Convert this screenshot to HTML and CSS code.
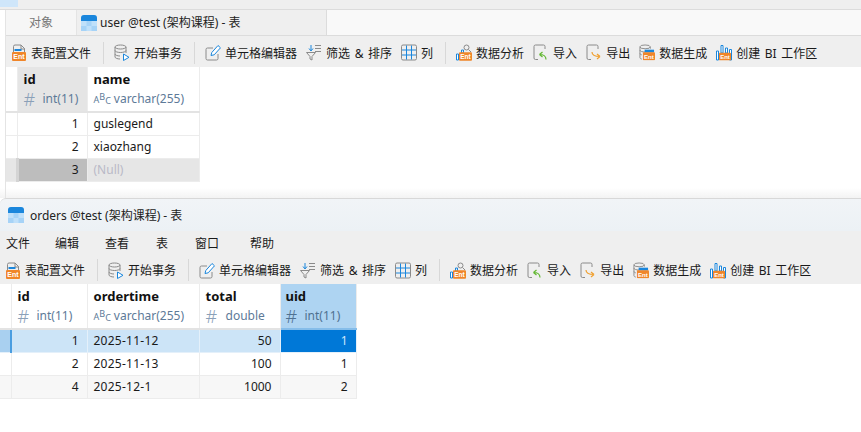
FILE: index.html
```html
<!DOCTYPE html>
<html lang="zh-CN">
<head>
<meta charset="utf-8">
<title>Navicat tables</title>
<link rel="stylesheet" href="styles.css">
</head>
<body>
<svg class="defs" width="0" height="0" aria-hidden="true">
  <defs>
    <symbol id="i-table" viewBox="0 0 16 16">
      <rect width="16" height="16" rx="3" fill="#bfe0fa"/>
      <path d="M0 3a3 3 0 0 1 3-3h10a3 3 0 0 1 3 3v3H0z" fill="#1a86dc"/>
      <rect x="5.500" y="6" width="5" height="5" fill="#a6d3f7"/>
      <rect y="11" width="5.500" height="5" fill="#a6d3f7"/>
      <rect x="10.500" y="11" width="5.500" height="5" fill="#a6d3f7"/>
    </symbol>
    <symbol id="i-ent" viewBox="0 0 14 9">
      <rect width="14" height="9" rx="1" fill="#f0862a"/>
      <text x="7" y="7.400" text-anchor="middle" class="ent">Ent</text>
    </symbol>
    <symbol id="i-profile" viewBox="0 0 16 17">
      <path d="M2.500 9V2.500a1.500 1.500 0 0 1 1.500-1.500h6l3.500 3.500V9" fill="none" stroke="#8a8a8a"/>
      <path d="M10 1v4h4" fill="none" stroke="#8a8a8a"/>
      <rect x="3.500" y="5" width="7" height="2" fill="#1a86dc"/>
      <use href="#i-ent" x="1" y="8" width="14" height="9"/>
    </symbol>
    <symbol id="i-tx" viewBox="0 0 16 17">
      <ellipse cx="6.500" cy="3" rx="5.500" ry="2" fill="none" stroke="#8a8a8a"/>
      <path d="M1 3v10c0 1.100 2.500 2 5 2M12 3v6M1 6.500c0 1.100 2.500 2 5.500 2s5.500-.9 5.500-2M1 10c0 1.100 2.500 2 5 2" fill="none" stroke="#8a8a8a"/>
      <path d="M9.500 10v6.500l5.500-3.200z" fill="#fff" stroke="#1a86dc"/>
    </symbol>
    <symbol id="i-edit" viewBox="0 0 16 17">
      <path d="M8 4H2.500A1.500 1.500 0 0 0 1 5.500v9A1.500 1.500 0 0 0 2.500 16h9a1.500 1.500 0 0 0 1.500-1.500V10" fill="none" stroke="#8a8a8a"/>
      <path d="M6 11.500l.8-3L13 1.500l2.500 2.300-6.300 7z" fill="#fff" stroke="#1a86dc"/>
    </symbol>
    <symbol id="i-filter" viewBox="0 0 16 17">
      <path d="M.5 8.500h9l-3.500 4v3.500l-2-1v-2.500z" fill="none" stroke="#8a8a8a"/>
      <path d="M5 1v5M3 4.500L5 7l2-2.500" fill="none" stroke="#1a86dc"/>
      <path d="M9 1.500h6M9 4.500h6M9 7.500h6" stroke="#8a8a8a"/>
    </symbol>
    <symbol id="i-cols" viewBox="0 0 16 16">
      <rect x=".5" y=".5" width="15" height="15" rx="1.500" fill="none" stroke="#8a8a8a"/>
      <path d="M5.500 1v14M10.500 1v14M1 5.500h14M1 10.500h14" stroke="#1a86dc"/>
    </symbol>
    <symbol id="i-analyze" viewBox="0 0 16 17">
      <circle cx="10.500" cy="3.500" r="2.500" fill="none" stroke="#8a8a8a"/>
      <path d="M12.500 5.500l2.500 2.500" stroke="#8a8a8a"/>
      <path d="M5.500 6h2v3h-2z" fill="none" stroke="#1a86dc"/>
      <path d="M.5 10h2v6h-2z" fill="#fff" stroke="#1a86dc"/>
      <use href="#i-ent" x="3" y="8" width="13" height="9"/>
    </symbol>
    <symbol id="i-import" viewBox="0 0 16 17">
      <path d="M5 15.500H2.500A1.500 1.500 0 0 1 1 14V2.500A1.500 1.500 0 0 1 2.500 1h8A1.500 1.500 0 0 1 12 2.500V5" fill="none" stroke="#8a8a8a"/>
      <path d="M13 15.500c0-3-2-5-6.500-5M6.500 10.500l3-2.500M6.500 10.500l3 2.500" fill="none" stroke="#62b832" stroke-width="1.200"/>
    </symbol>
    <symbol id="i-export" viewBox="0 0 16 17">
      <path d="M5 15.500H2.500A1.500 1.500 0 0 1 1 14V2.500A1.500 1.500 0 0 1 2.500 1h8A1.500 1.500 0 0 1 12 2.500V5" fill="none" stroke="#8a8a8a"/>
      <path d="M6 8c0 2.500 2.500 4.500 8 4.500M14 12.500l-3-2.500M14 12.500l-3 2.500" fill="none" stroke="#f0a030" stroke-width="1.200"/>
    </symbol>
    <symbol id="i-gen" viewBox="0 0 17 17">
      <ellipse cx="6.500" cy="2.500" rx="5.500" ry="2" fill="none" stroke="#8a8a8a"/>
      <path d="M1 2.500v11.500c0 .8 1 1.300 2 1.500M12 2.500v2M1 6c0 1.100 2.500 2 5.500 2M1 9.500c0 .8 1 1.300 2 1.500" fill="none" stroke="#8a8a8a"/>
      <path d="M6 5.500h10v3H6z" fill="#1a86dc"/>
      <use href="#i-ent" x="4" y="8" width="13" height="9"/>
    </symbol>
    <symbol id="i-bi" viewBox="0 0 16 17">
      <path d="M.5 7h2v9h-2zM5 1.500h2V9H5zM9.500 4h2v5h-2zM13.500 5.500h2V16h-2z" fill="#fff" stroke="#1a86dc"/>
      <use href="#i-ent" x="3" y="8" width="12" height="9"/>
    </symbol>
  </defs>
</svg>

<section class="window top-window">
  <div class="top-strip"><span class="strip-tab"></span></div>
  <div class="tabs">
    <div class="tab tab-objects">对象</div>
    <div class="tab tab-active"><svg class="tab-icon"><use href="#i-table"/></svg>user @test (架构课程) - 表</div>
  </div>
  <div class="toolbar toolbar-top">
    <span class="tool"><svg class="ico"><use href="#i-profile"/></svg>表配置文件</span>
    <i class="sep"></i>
    <span class="tool"><svg class="ico"><use href="#i-tx"/></svg>开始事务</span>
    <i class="sep"></i>
    <span class="tool"><svg class="ico"><use href="#i-edit"/></svg>单元格编辑器</span>
    <span class="tool"><svg class="ico"><use href="#i-filter"/></svg>筛选 &amp; 排序</span>
    <span class="tool"><svg class="ico"><use href="#i-cols"/></svg>列</span>
    <i class="sep"></i>
    <span class="tool"><svg class="ico"><use href="#i-analyze"/></svg>数据分析</span>
    <span class="tool"><svg class="ico"><use href="#i-import"/></svg>导入</span>
    <span class="tool"><svg class="ico"><use href="#i-export"/></svg>导出</span>
    <span class="tool"><svg class="ico"><use href="#i-gen"/></svg>数据生成</span>
    <span class="tool"><svg class="ico"><use href="#i-bi"/></svg>创建 BI 工作区</span>
  </div>
  <table class="grid grid-user">
    <colgroup><col class="c-mark"><col class="c-id"><col class="c-name"></colgroup>
    <thead>
      <tr>
        <th class="mark"></th>
        <th class="col-selected-gray"><b>id</b><span class="type"><span class="hash">#</span>int(11)</span></th>
        <th><b>name</b><span class="type"><span class="abc">A<span class="abc-b">B</span><span class="abc-c">C</span></span>varchar(255)</span></th>
      </tr>
    </thead>
    <tbody>
      <tr><td class="mark"></td><td class="num">1</td><td>guslegend</td></tr>
      <tr><td class="mark"></td><td class="num">2</td><td>xiaozhang</td></tr>
      <tr class="row-gray"><td class="mark mark-gray"></td><td class="num cell-gray">3</td><td class="null">(Null)</td></tr>
    </tbody>
  </table>
</section>

<section class="window bottom-window">
  <div class="titlebar"><svg class="tab-icon"><use href="#i-table"/></svg>orders @test (架构课程) - 表</div>
  <nav class="menu"><span>文件</span><span>编辑</span><span>查看</span><span>表</span><span>窗口</span><span>帮助</span></nav>
  <div class="toolbar toolbar-bottom">
    <span class="tool"><svg class="ico"><use href="#i-profile"/></svg>表配置文件</span>
    <i class="sep"></i>
    <span class="tool"><svg class="ico"><use href="#i-tx"/></svg>开始事务</span>
    <i class="sep"></i>
    <span class="tool"><svg class="ico"><use href="#i-edit"/></svg>单元格编辑器</span>
    <span class="tool"><svg class="ico"><use href="#i-filter"/></svg>筛选 &amp; 排序</span>
    <span class="tool"><svg class="ico"><use href="#i-cols"/></svg>列</span>
    <i class="sep"></i>
    <span class="tool"><svg class="ico"><use href="#i-analyze"/></svg>数据分析</span>
    <span class="tool"><svg class="ico"><use href="#i-import"/></svg>导入</span>
    <span class="tool"><svg class="ico"><use href="#i-export"/></svg>导出</span>
    <span class="tool"><svg class="ico"><use href="#i-gen"/></svg>数据生成</span>
    <span class="tool"><svg class="ico"><use href="#i-bi"/></svg>创建 BI 工作区</span>
  </div>
  <table class="grid grid-orders">
    <colgroup><col class="c-mark"><col class="c-id2"><col class="c-name"><col class="c-total"><col class="c-uid"></colgroup>
    <thead>
      <tr>
        <th class="mark"></th>
        <th><b>id</b><span class="type"><span class="hash">#</span>int(11)</span></th>
        <th><b>ordertime</b><span class="type"><span class="abc">A<span class="abc-b">B</span><span class="abc-c">C</span></span>varchar(255)</span></th>
        <th><b>total</b><span class="type type-wide"><span class="hash">#</span>double</span></th>
        <th class="col-selected"><b>uid</b><span class="type"><span class="hash">#</span>int(11)</span></th>
      </tr>
    </thead>
    <tbody>
      <tr class="row-selected"><td class="mark mark-selected"></td><td class="num">1</td><td class="date">2025-11-12</td><td class="num">50</td><td class="num cell-active">1</td></tr>
      <tr><td class="mark"></td><td class="num">2</td><td class="date">2025-11-13</td><td class="num">100</td><td class="num">1</td></tr>
      <tr class="row-alt"><td class="mark"></td><td class="num">4</td><td class="date">2025-12-1</td><td class="num">1000</td><td class="num">2</td></tr>
    </tbody>
  </table>
</section>
</body>
</html>
```
FILE: styles.css
```css
* { box-sizing: border-box; }
html, body { margin: 0; padding: 0; }
body {
  width: 861px;
  height: 432px;
  overflow: hidden;
  background: #fff;
  color: #1a1a1a;
  font-family: "Noto Sans", "Noto Sans CJK SC", sans-serif;
  font-size: 12px;
}
.defs { position: absolute; }
.ent { font: 700 7px "Liberation Sans", sans-serif; fill: #fff; }

.window { display: flex; flex-direction: column; }
.top-window {
  height: 198px;
  background:
    linear-gradient(#e4e4e4, #e4e4e4) 5px 0 / 1px 100% no-repeat,
    linear-gradient(#fff 188px, #f3f3f3);
}

.top-strip {
  height: 10px;
  background: #efefef;
  border-bottom: 1px solid #dcdcdc;
}
.strip-tab { display: block; width: 18px; height: 7px; background: #cfe6fa; }

.tabs {
  display: flex;
  height: 26px;
  margin-left: 6px;
  background: #f9f9f9;
  border-bottom: 1px solid #dcdcdc;
}
.tab { display: flex; align-items: center; line-height: 25px; }
.tab-objects {
  width: 71px;
  justify-content: center;
  background: #f6f6f6;
  border-right: 1px solid #e4e4e4;
  color: #777;
}
.tab-active {
  width: 250px;
  background: #efefef;
  border-right: 1px solid #dcdcdc;
  padding-left: 4px;
  color: #222;
  gap: 3px;
}
.tab-icon { width: 16px; height: 16px; flex: none; }

.toolbar {
  display: flex;
  align-items: center;
  background: #efefef;
  white-space: nowrap;
  word-spacing: 1.5px;
}
.toolbar-top { height: 31px; margin-left: 6px; padding: 2px 0 0 5px; }
.toolbar-bottom { height: 28px; padding-left: 5px; }
.tool { display: flex; align-items: center; gap: 4px; margin-right: 9px; }
.ico { width: 16px; height: 17px; flex: none; }
.sep { width: 1px; height: 22px; margin: 0 10px 0 3px; background: #d8d8d8; }

.grid { border-collapse: collapse; table-layout: fixed; background: #fff; }
.grid-user { width: 193px; margin-left: 6px; }
.grid-orders { width: 356px; }
.c-mark { width: 11px; }
.c-id { width: 70px; }
.c-name { width: 112px; }
.c-id2 { width: 76px; }
.c-total { width: 81px; }
.c-uid { width: 76px; }

.grid th, .grid td { border: 1px solid #ececec; padding: 0 6px; overflow: hidden; white-space: nowrap; }
.grid th { height: 45px; text-align: left; font-weight: 400; vertical-align: top; padding-top: 3px; border-bottom: 2px solid #e3e3e3; }
.grid td { height: 23px; line-height: 20px; font-size: 12px; }
.grid th:first-child, .grid td:first-child { border-left: 0; }
.grid thead th { border-top: 0; }
.grid b { display: block; font-size: 13px; line-height: 19px; font-weight: 700; color: #111; }
.type { display: flex; align-items: center; gap: 4px; line-height: 20px; color: #5d7a98; font-size: 12px; }
.type-wide { gap: 5px; }
.hash { font-size: 18px; line-height: 20px; color: #8aa0b8; font-weight: 300; width: 13px; margin-right: 2px; }
.abc { font-size: 9px; line-height: 12px; color: #5d7a98; display: inline-flex; align-items: center; transform: translateY(1px); margin-right: -1px; }
.abc-b { transform: translateY(-3px); }
.abc-c { transform: translateY(1px); }
.num { text-align: right; padding-right: 8px !important; }
.date { letter-spacing: .25px; }

.col-selected-gray { background: #e5e5e5; }
.row-gray td { background: #e6e6e6; }
.row-gray .cell-gray { background: #bdbdbd; }
.mark-gray { border-right: 3px solid #d4d4d4 !important; }
.null { color: #b9b9c6; }

.bottom-window { height: 234px; }
.titlebar {
  display: flex;
  align-items: center;
  gap: 6px;
  height: 33px;
  padding: 0 0 0 8px;
  background: linear-gradient(#f1f4f7, #ecf1f5);
  border-top: 1px solid #d8d8d8;
  border-top-left-radius: 6px;
  color: #222;
}
.menu {
  display: grid;
  grid-template-columns: 49px 50px 51px 39px 55px auto;
  align-items: center;
  height: 25px;
  padding: 0 0 2px 6px;
  background: #efefef;
  color: #1a1a1a;
}

.col-selected { background: #aed4f2; border-bottom-color: #85bdea !important; padding-left: 5px !important; }
.col-selected .type, .col-selected .hash { color: #4f7191; }
.row-selected td { background: #cce4f7; border-color: #e4f0fa; }
.mark-selected { background: #a9d0f0 !important; border-right: 2px solid #4a9de0 !important; }
.cell-active { background: #0078d7 !important; color: #cfe6fa; }
.row-alt td { background: #f7f7f7; }
```
